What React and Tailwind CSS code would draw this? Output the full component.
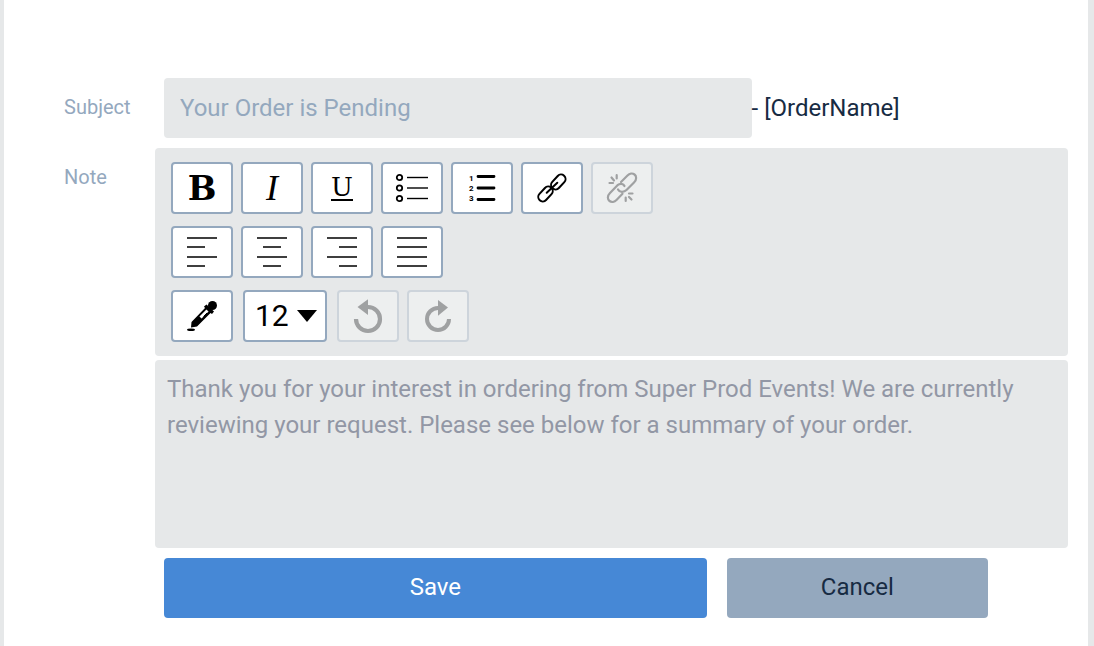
import React, { useState } from 'react';
import clsx from 'clsx';

const Icon = ({ children, strokeWidth = 2 }) => (
  <svg
    className="size-8 overflow-visible"
    viewBox="0 0 32 32"
    fill="none"
    stroke="currentColor"
    strokeWidth={strokeWidth}
    aria-hidden="true"
  >
    {children}
  </svg>
);

const BulletListIcon = () => (
  <Icon strokeWidth={1.4}>
    {[5.5, 16, 26.5].map((y) => (
      <g key={y}>
        <circle cx="3.5" cy={y} r="2.7" strokeWidth="1.8" />
        <path d={`M11 ${y}H32`} />
      </g>
    ))}
  </Icon>
);

const NumberedListIcon = () => (
  <Icon strokeWidth={2.8}>
    <path d="M12 4.5H28M12 16H28M12 27.5H28" strokeLinecap="round" />
    <g className="text-[8px] font-bold" fill="currentColor" stroke="none">
      <text x="3" y="9">1</text>
      <text x="3" y="19">2</text>
      <text x="3" y="29">3</text>
    </g>
  </Icon>
);

const LinkIcon = () => (
  <Icon>
    <rect x="1" y="17.5" width="17" height="9" rx="4.5" transform="rotate(-47 9.5 22)" />
    <rect x="13.8" y="5.5" width="17" height="9" rx="4.5" transform="rotate(-47 22.3 10)" />
    <path d="M10.7 20.7L21.3 10.7" strokeLinecap="round" />
  </Icon>
);

const UnlinkIcon = () => (
  <Icon strokeWidth={2.2}>
    <g strokeLinecap="round" strokeLinejoin="round">
      <path d="M18.5 14C17.5 11.5 14 11 11.5 13.2L4 21C1 24 1.5 27.5 3.5 29C5.5 30.5 8.5 30 10.5 28L16.5 21.8" />
      <path d="M12 17.5C13.5 20.5 18 20.5 20.5 18L28 10.5C31 7.5 30.5 4 28.5 2.5C26.5 1 23.5 1.5 21.5 3.5L15 10" />
      <path d="M10.7 3.2V6.5M5.5 5.5L8 8.5M3.5 11H7M23 21.5H26.5M23 25L25.5 27.5M19.7 25.5V29" />
    </g>
  </Icon>
);

const ALIGN_PATHS = {
  Left: 'M1 2H31M1 11H19M1 21H31M1 30H19',
  Center: 'M1 2H31M7 11H25M1 21H31M7 30H25',
  Right: 'M1 2H31M13 11H31M1 21H31M13 30H31',
  Justify: 'M1 2H31M1 11H31M1 21H31M1 30H31',
};

const ColorPickerIcon = () => (
  <Icon>
    <g fill="currentColor" stroke="none">
      <path d="M18 6.5L20.5 4.5L28 11.5L26 14L24.5 13L11 26.5L5 27.5L5.5 22L19 8Z" />
      <circle cx="26.5" cy="5.5" r="4.5" />
      <ellipse cx="5" cy="29.7" rx="4" ry="1.3" />
    </g>
    <path d="M14.5 17.5L21.5 10.5" stroke="white" strokeWidth="3" />
    <path d="M17.5 16.5L21 13" strokeWidth="1" />
  </Icon>
);

const UndoIcon = () => (
  <Icon strokeWidth={4.2}>
    <path d="M4 19A12 12 0 1 0 16 7" />
    <path d="M5.5 7L16 -0.7V15Z" fill="currentColor" stroke="none" />
  </Icon>
);

const RedoIcon = () => (
  <Icon strokeWidth={4}>
    <path d="M27 19A11 11 0 1 1 16 8" />
    <path d="M26 7.5L16 0V15.7Z" fill="currentColor" stroke="none" />
  </Icon>
);

const ToolButton = ({ label, disabled, children }) => (
  <button
    type="button"
    aria-label={label}
    title={label}
    disabled={disabled}
    className={clsx(
      'flex h-[52px] w-[62px] items-center justify-center rounded border-2 border-[#94a8be] bg-white text-black',
      disabled && 'opacity-30'
    )}
  >
    {children}
  </button>
);

const Toolbar = () => {
  const [fontSize, setFontSize] = useState('12');

  return (
    <div className="flex flex-col gap-3 rounded bg-[#e6e8e9] px-4 py-3.5" role="toolbar" aria-label="Formatting">
      {/* Inline styles, lists and links */}
      <div className="flex flex-wrap gap-2">
        <ToolButton label="Bold">
          <span className="font-[DejaVu_Serif,serif] text-[34px] leading-8 font-bold">B</span>
        </ToolButton>
        <ToolButton label="Italic">
          <span className="font-[Liberation_Serif,serif] text-4xl leading-8 italic">I</span>
        </ToolButton>
        <ToolButton label="Underline">
          <span className="border-b-2 border-black font-[DejaVu_Serif,serif] text-[26px] leading-6">U</span>
        </ToolButton>
        <ToolButton label="Bulleted list"><BulletListIcon /></ToolButton>
        <ToolButton label="Numbered list"><NumberedListIcon /></ToolButton>
        <ToolButton label="Link"><LinkIcon /></ToolButton>
        <ToolButton label="Unlink" disabled><UnlinkIcon /></ToolButton>
      </div>

      {/* Alignment */}
      <div className="flex flex-wrap gap-2">
        {Object.entries(ALIGN_PATHS).map(([name, d]) => (
          <ToolButton key={name} label={name}>
            <Icon strokeWidth={1.5}><path d={d} /></Icon>
          </ToolButton>
        ))}
      </div>

      {/* Color, font size and history */}
      <div className="flex flex-wrap gap-2">
        <ToolButton label="Color picker"><ColorPickerIcon /></ToolButton>
        <div className="relative mx-0.5">
          <select
            aria-label="Font size"
            value={fontSize}
            onChange={(e) => setFontSize(e.target.value)}
            className="h-[52px] w-[84px] appearance-none rounded border-2 border-[#94a8be] bg-white pl-2.5 font-[Roboto,sans-serif] text-[30px] leading-none text-black"
          >
            {['8', '10', '12', '14', '18', '24'].map((size) => (
              <option key={size}>{size}</option>
            ))}
          </select>
          <svg className="pointer-events-none absolute top-5 right-2.5 h-3 w-5" viewBox="0 0 20 12" aria-hidden="true">
            <path d="M0 0H20L10 12Z" />
          </svg>
        </div>
        <ToolButton label="Undo" disabled><UndoIcon /></ToolButton>
        <ToolButton label="Redo" disabled><RedoIcon /></ToolButton>
      </div>
    </div>
  );
};

const App = () => {
  const [subject, setSubject] = useState('Your Order is Pending');
  const [note, setNote] = useState(
    'Thank you for your interest in ordering from Super Prod Events! We are currently reviewing your request. Please see below for a summary of your order.'
  );

  return (
    <form
      className="min-h-screen border-r-[6px] border-l-4 border-[#e6e8e9] bg-white pt-[78px] pr-5 pb-7 pl-[60px] font-[Roboto,sans-serif] text-2xl text-[#172b43]"
      onSubmit={(e) => e.preventDefault()}
    >
      <div className="flex items-center">
        <label htmlFor="subject" className="w-[100px] shrink-0 pb-0.5 text-xl text-[#94a8be]">Subject</label>
        <div className="flex flex-1 items-center">
          <input
            id="subject"
            type="text"
            value={subject}
            onChange={(e) => setSubject(e.target.value)}
            className="h-[60px] w-[65%] rounded bg-[#e6e8e9] px-4 text-[#94a8be]"
          />
          <span>- [OrderName]</span>
        </div>
      </div>

      <div className="mt-2.5 flex">
        <label htmlFor="note" className="w-[91px] shrink-0 pt-[15px] text-xl text-[#94a8be]">Note</label>
        <div className="flex min-w-0 flex-1 flex-col gap-1">
          <Toolbar />
          <textarea
            id="note"
            value={note}
            onChange={(e) => setNote(e.target.value)}
            className="h-[188px] resize-none rounded bg-[#e6e8e9] px-3 py-[11px] leading-9 text-[#9297a5]"
          />
        </div>
      </div>

      <div className="mt-2.5 mr-20 ml-[100px] flex gap-5">
        <button type="submit" className="h-[60px] flex-[27] rounded bg-[#4688d6] pb-0.5 text-white">Save</button>
        <button type="button" className="h-[60px] flex-[13] rounded bg-[#94a8be] pb-0.5">Cancel</button>
      </div>
    </form>
  );
};

export default App;
